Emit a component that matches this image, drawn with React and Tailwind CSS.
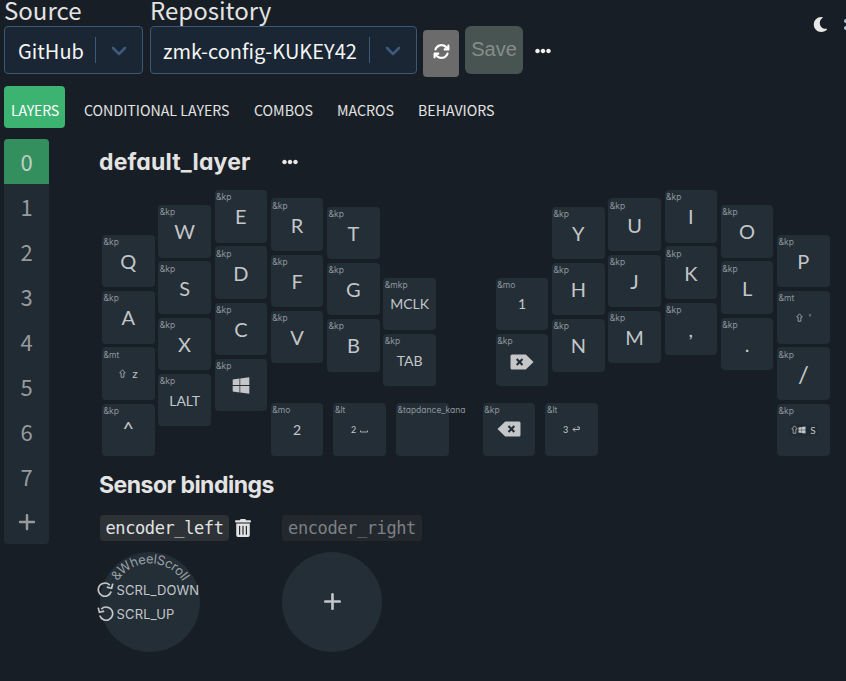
import React from 'react'
import { FaEllipsisH, FaTrashAlt, FaWindows, FaMoon } from 'react-icons/fa'
import { FaArrowsRotate, FaPlus } from 'react-icons/fa6'

const SANS = "font-['Noto_Sans_CJK_SC','Noto_Sans',sans-serif]"
const ROUND = "font-['Inter',sans-serif] [font-feature-settings:'cv11']"

function Chevron() {
  return (
    <svg viewBox="0 0 16 10" className="h-[10px] w-[16px]" fill="none" stroke="#3b5a7c" strokeWidth="2.6" strokeLinecap="round" strokeLinejoin="round">
      <path d="M2 2 L8 8 L14 2" />
    </svg>
  )
}

function Erase({ flip }) {
  return (
    <svg viewBox="0 0 24 16" className={flip ? 'mt-[3px] h-4 w-6 -scale-x-100' : 'h-4 w-6'}>
      <path d="M8.2 .5 H22 Q23.5 .5 23.5 2 V14 Q23.5 15.5 22 15.5 H8.2 L.5 8 Z" fill="#c4c6c8" />
      <path d="M11.5 5 L17.3 11 M17.3 5 L11.5 11" stroke="#232e37" strokeWidth="2.1" />
    </svg>
  )
}

function Select({ text, width, pad }) {
  return (
    <div className={`flex h-12 items-center rounded border border-[#3b5876] bg-[#1a2633] ${width}`}>
      <span className={`flex-1 whitespace-nowrap pt-[2px] text-[20px] leading-none text-[#f4f4f4] ${pad}`}>{text}</span>
      <span className="h-[26px] w-px bg-[#3b5a7c]" />
      <span className="flex w-[46px] items-center justify-center pt-px"><Chevron /></span>
    </div>
  )
}

function Key({ b = '&kp', children, size = 'text-[20px]' }) {
  return (
    <div className="relative flex h-[52.5px] w-[52.5px] shrink-0 items-center justify-center rounded-[4px] bg-[#232e37] text-[#c4c6c8]">
      <span className={`absolute left-[1.5px] top-[1.3px] whitespace-nowrap text-[8.5px] leading-[12px] text-[#8f959a] ${ROUND}`}>{b}</span>
      <span className={`flex items-center whitespace-nowrap font-['Lato',sans-serif] leading-none ${size}`}>{children}</span>
    </div>
  )
}

const Col = ({ top, children }) => (
  <div className={`flex flex-col gap-[3.75px] ${top}`}>{children}</div>
)

const MED = 'text-[14px] pt-px'
const SMALL = 'text-[9px]'

function Shift() {
  return (
    <svg viewBox="0 0 8 10" className="h-[9px] w-[7px]" fill="none" stroke="#a5a9ac" strokeWidth="1">
      <path d="M4 .8 L7.2 4.4 H5.6 V9.3 H2.4 V4.4 H.8 Z" />
    </svg>
  )
}

function Keyboard() {
  return (
    <div className="mt-[13px] flex h-[265.6px] items-start gap-[3.75px] pl-[3.1px]">
      <Col top="pt-[44.8px]">
        <Key>Q</Key>
        <Key>A</Key>
        <Key b="&mt" size={SMALL}><Shift /><span className="ml-[6px] text-[12px]">z</span></Key>
        <Key><span className="-mt-1">^</span></Key>
      </Col>
      <Col top="pt-[15px]">
        <Key>W</Key><Key>S</Key><Key>X</Key><Key size={MED}>LALT</Key>
      </Col>
      <Col top="pt-0">
        <Key>E</Key><Key>D</Key><Key>C</Key><Key><FaWindows className="h-[19px] w-[20px]" /></Key>
      </Col>
      <div className="flex h-full w-[502.5px] flex-col justify-between">
        <div className="flex gap-[3.75px]">
          <Col top="pt-[8.3px]"><Key>R</Key><Key>F</Key><Key>V</Key></Col>
          <Col top="pt-[16.5px]"><Key>T</Key><Key>G</Key><Key>B</Key></Col>
          <Col top="pt-[87.5px]"><Key b="&mkp" size={MED}>MCLK</Key><Key size={MED}>TAB</Key></Col>
          <div className="w-[52.5px]" />
          <Col top="pt-[87.5px]"><Key b="&mo" size={MED}>1</Key><Key><Erase flip /></Key></Col>
          <Col top="pt-[16.5px]"><Key>Y</Key><Key>H</Key><Key>N</Key></Col>
          <Col top="pt-[8.3px]"><Key>U</Key><Key>J</Key><Key>M</Key></Col>
          <Col top="pt-0"><Key>I</Key><Key>K</Key><Key>,</Key></Col>
          <Col top="pt-[15px]"><Key>O</Key><Key>L</Key><Key>.</Key></Col>
        </div>
        <div className="flex gap-[10.1px]">
          <Key b="&mo" size={MED}>2</Key>
          <Key b="&lt" size={SMALL}>
            2
            <svg viewBox="0 0 8 4" className="ml-1 mt-1 h-1 w-2" fill="none" stroke="#a5a9ac"><path d="M.5 1.5 V3 H7.5 V1.5" /></svg>
          </Key>
          <Key b="&tapdance_kana" />
          <div className="ml-[24.2px] flex gap-[10.1px]">
            <Key><Erase /></Key>
            <Key b="&lt" size={SMALL}>
              3
              <svg viewBox="0 0 8 6" className="ml-1 h-[6px] w-2" fill="none" stroke="#b5b8ba"><path d="M5 1 H7.3 V3.5 H1 M3 1.5 L1 3.5 L3 5.5" /></svg>
            </Key>
          </div>
        </div>
      </div>
      <Col top="pt-[44.8px]">
        <Key>P</Key>
        <Key b="&mt" size={SMALL}><Shift /><span className="ml-[6px]">'</span></Key>
        <Key><span className="text-[24px]">/</span></Key>
        <Key size={SMALL}>
          <span className="flex items-center rounded bg-[#202a32] px-[2px] py-[1px]">
            <Shift /><FaWindows className="h-[8px] w-[8px]" /><span className="ml-1 text-[10px]">S</span>
          </span>
        </Key>
      </Col>
    </div>
  )
}

function Rotate({ flip }) {
  return (
    <svg viewBox="0 0 17 16" className={flip ? 'h-4 w-[17px] -scale-x-100' : 'h-4 w-[17px]'} fill="none" stroke="#c4c6c8" strokeWidth="1.7">
      <path d="M12.8 3.2 A6.6 6.6 0 1 0 14.2 9.6" />
      <path d="M15.8 1.6 L14.6 6.3 L9.8 5.1" />
    </svg>
  )
}

export default function App() {
  return (
    <div className={`flex h-[681px] w-[846px] flex-col overflow-hidden bg-[#181e25] text-[#e3e3e3] ${SANS}`}>
      <header className="flex h-[86px] items-start pl-1">
        <div className="w-[146px]">
          <div className="h-[26px] text-[24px] leading-[19px]">Source</div>
          <Select text="GitHub" width="w-[139px]" pad="pl-[13px]" />
        </div>
        <div className="w-[273px]">
          <div className="h-[26px] text-[24px] leading-[19px]">Repository</div>
          <Select text="zmk-config-KUKEY42" width="w-[267px]" pad="pl-[12px]" />
        </div>
        <div className="mt-[30px] flex h-[47px] w-9 items-center justify-center rounded-sm bg-[#6b6b6b] pb-1">
          <FaArrowsRotate className="h-[17px] w-[17px] text-white" />
        </div>
        <div className="ml-[6px] mt-[26px] flex h-12 w-[58px] items-center justify-center rounded-md bg-[#475451] pb-[2px] font-['Liberation_Sans',Arial,sans-serif] text-[20px] text-[#878c8b]">Save</div>
        <FaEllipsisH className="ml-3 mt-[43px] h-4 w-4 text-[#f2f2f2]" />
        <FaMoon className="ml-auto mt-[17px] h-[15px] w-[15px] text-[#e8e8e8]" />
        <div className="ml-[16px] mt-[19px] flex w-[2px] flex-col gap-[3px]">
          <span className="h-1 w-[2px] rounded-l bg-[#a9c6de]" />
          <span className="h-1 w-[2px] rounded-l bg-[#a9c6de]" />
        </div>
      </header>
      <nav className="flex h-[53px] items-start pl-1 text-[14.2px] leading-[49px]">
        <span className="flex h-[42px] w-[61px] justify-center rounded bg-[#3cb371] pl-px tracking-[-0.2px] text-white">LAYERS</span>
        <span className="ml-[19px] w-[170px] whitespace-nowrap">CONDITIONAL LAYERS</span>
        <span className="w-[83px]">COMBOS</span>
        <span className="w-[81px]">MACROS</span>
        <span>BEHAVIORS</span>
      </nav>
      <main className="flex pl-1">
        <aside className="flex h-[405px] w-[45px] flex-col overflow-hidden rounded bg-[#212b33] text-[22px] text-[#969a9d]">
          <div className="flex h-[45px] items-center justify-center bg-[#338f5e] text-[#c3cfc8]">0</div>
          {[1, 2, 3, 4, 5, 6, 7].map((n) => (
            <div key={n} className="flex h-[45px] items-center justify-center">{n}</div>
          ))}
          <div className="flex h-[45px] items-center justify-center"><FaPlus className="h-[20px] w-[20px]" /></div>
        </aside>
        <section className="ml-[50px]">
          <div className="flex h-[38px] items-center pt-[8px]">
            <h2 className={`w-[183px] text-[23px] font-bold leading-[46px] tracking-[0.15px] ${ROUND}`}>default_layer</h2>
            <FaEllipsisH className="h-4 w-4 text-[#e8e8e8]" />
          </div>
          <Keyboard />
          <h2 className={`mt-[13.4px] h-[46px] text-[23px] font-bold leading-[32px] tracking-[-0.5px] ${ROUND}`}>Sensor bindings</h2>
          <div className="flex pl-px">
            <div className="w-[182px]">
              <div className="flex items-center">
                <code className="flex h-[26px] w-[129px] items-center justify-center rounded-sm bg-[#2d3237] pt-[2px] font-['DejaVu_Sans_Mono',monospace] text-[17px] tracking-[-0.4px] text-[#e3e3e3]">encoder_left</code>
                <FaTrashAlt className="ml-[6px] h-[18px] w-4 text-[#e3e3e3]" />
              </div>
              <div className={`relative mt-[11px] h-[100px] w-[100px] rounded-full bg-[#232e37] text-[#c4c6c8] ${ROUND}`}>
                <svg viewBox="0 0 100 100" className="absolute inset-0 h-full w-full overflow-visible">
                  <path id="rim" d="M11.5 50 A38.5 38.5 0 0 1 88.5 50" fill="none" />
                  <text fill="#9a9fa3" fontSize="13" textAnchor="middle" letterSpacing="-0.35"><textPath href="#rim" startOffset="50%">&amp;WheelScroll</textPath></text>
                </svg>
                <div className="flex flex-col gap-2 pt-[30px] text-[13px] leading-4">
                  <div className="-ml-[3.5px] flex gap-[3px] tracking-[0.1px]"><Rotate /><span>SCRL_DOWN</span></div>
                  <div className="-ml-[3.5px] flex gap-[3px] tracking-[0.15px]"><Rotate flip /><span>SCRL_UP</span></div>
                </div>
              </div>
            </div>
            <div>
              <code className="flex h-[26px] w-[140px] items-center justify-center rounded-sm bg-[#23282e] pt-[2px] font-['DejaVu_Sans_Mono',monospace] text-[17px] tracking-[-0.4px] text-[#7d8083]">encoder_right</code>
              <div className="mt-[11px] flex h-[100px] w-[100px] items-center justify-center rounded-full bg-[#232e37] pl-px">
                <FaPlus className="h-[21px] w-[21px] text-[#c4c6c8]" />
              </div>
            </div>
          </div>
        </section>
      </main>
    </div>
  )
}
